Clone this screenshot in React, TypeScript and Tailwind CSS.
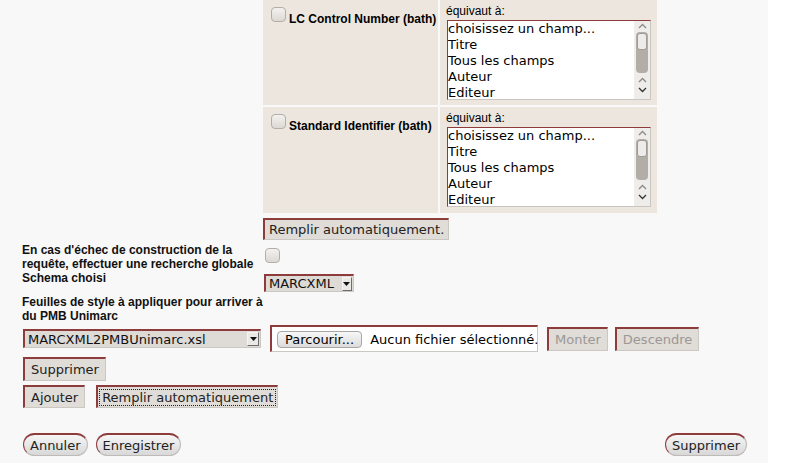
import type { ReactNode } from "react";

const fieldOptions = ["choisissez un champ...", "Titre", "Tous les champs", "Auteur", "Editeur"];

function Checkbox({ className = "" }: { className?: string }) {
  return (
    <span
      className={`block h-[15px] w-[15px] shrink-0 rounded-[4px] border border-[#b3aea8] bg-gradient-to-b from-[#f3f1ef] to-[#dcd8d4] ${className}`}
    />
  );
}

function Chevron({ down = false, color = "#777" }: { down?: boolean; color?: string }) {
  return (
    <svg width="9" height="6" viewBox="0 0 9 6" fill="none">
      <polyline
        points={down ? "1,1 4.5,4.5 8,1" : "1,5 4.5,1.5 8,5"}
        stroke={color}
        strokeWidth="1.3"
      />
    </svg>
  );
}

function FieldList() {
  return (
    <div className="ml-[1px] flex h-[80px] w-[204px] border border-[#c9c5c1] border-l-[#8e3b3b] border-t-[#8e3b3b] bg-white">
      <div className="flex-1 overflow-hidden font-['DejaVu_Sans',sans-serif] text-[13px] leading-[16px] text-black">
        {fieldOptions.map((option) => (
          <div key={option} className="whitespace-nowrap">
            {option}
          </div>
        ))}
      </div>
      <div className="flex w-[16px] flex-col items-center bg-[#efedea]">
        <div className="flex h-[9px] items-center">
          <Chevron color="#8a8a8a" />
        </div>
        <div className="mt-[2px] h-[41px] w-[12px] rounded-[4px] bg-[#b2ada7] p-[1px]">
          <div className="h-[17px] rounded-[3px] border border-[#9f9a95] bg-[#eeecea]" />
        </div>
        <div className="mt-[2px] flex h-[10px] items-center">
          <Chevron color="#8a8a8a" />
        </div>
        <div className="flex h-[10px] items-center">
          <Chevron down color="#333" />
        </div>
      </div>
    </div>
  );
}

function MappingRow({ label, height }: { label: string; height: string }) {
  return (
    <>
      <div className={`flex items-start bg-[#ece6df] pl-[8px] ${height}`}>
        <Checkbox className="mt-[7px]" />
        <span className="ml-[3px] mt-[12px] whitespace-nowrap text-[12px] font-bold leading-[14px] text-black">
          {label}
        </span>
      </div>
      <div className={`bg-[#ece6df] pl-[6px] pt-[4px] ${height}`}>
        <div className="text-[12px] leading-[14px] text-black">équivaut à:</div>
        <div className="mt-[2px]">
          <FieldList />
        </div>
      </div>
    </>
  );
}

function Btn({
  children,
  disabled = false,
  pad = "px-[6px]",
  className = ""
}: {
  children: ReactNode;
  disabled?: boolean;
  pad?: string;
  className?: string;
}) {
  return (
    <button
      type="button"
      disabled={disabled}
      className={`flex shrink-0 items-center whitespace-nowrap border-b border-l-2 border-r border-t-2 border-b-[#cbc7c3] border-l-[#8e3b3b] border-r-[#cbc7c3] border-t-[#8e3b3b] bg-[#e0dcd8] font-['DejaVu_Sans',sans-serif] text-[13px] leading-none ${
        disabled ? "text-[#9b9895]" : "text-[#222]"
      } ${pad} ${className}`}
    >
      {children}
    </button>
  );
}

function Pill({ children }: { children: ReactNode }) {
  return (
    <button
      type="button"
      className="flex h-[23px] items-center whitespace-nowrap rounded-full border border-[#bdbab7] border-l-[#8e3b3b] border-t-2 border-t-[#8e3b3b] bg-gradient-to-b from-[#f6f6f6] to-[#d8d8d8] px-[6px] font-['DejaVu_Sans',sans-serif] text-[13px] leading-none text-[#222]"
    >
      {children}
    </button>
  );
}

function Select({ value, size, className = "" }: { value: string; size: string; className?: string }) {
  return (
    <div
      className={`flex shrink-0 items-center justify-between border-b border-l-2 border-r border-t-2 border-b-[#cbc7c3] border-l-[#8e3b3b] border-r-[#cbc7c3] border-t-[#8e3b3b] bg-[#dedad6] pl-[3px] pr-[1px] font-['DejaVu_Sans',sans-serif] text-[13px] font-normal leading-none text-[#111] ${size} ${className}`}
    >
      <span className="whitespace-nowrap">{value}</span>
      <span className="ml-[8px] flex h-[14px] w-[12px] items-center justify-center border border-[#f5f5f5] border-b-[#6d6d6d] border-r-[#6d6d6d] bg-[#ebe9e6]">
        <svg width="7" height="4" viewBox="0 0 7 4">
          <polygon points="0,0 7,0 3.5,4" fill="#111" />
        </svg>
      </span>
    </div>
  );
}

export default function App() {
  return (
    <div className="h-[463px] w-[768px] overflow-hidden bg-[#f8f8f8] font-['Liberation_Sans',Arial,sans-serif]">
      <div className="ml-[263px] grid w-[394px] grid-cols-[175px_217px] gap-[2px]">
        <MappingRow label="LC Control Number (bath)" height="h-[105px]" />
        <MappingRow label="Standard Identifier (bath)" height="h-[106px]" />
      </div>

      <Btn pad="px-[4px]" className="ml-[263px] mt-[5px] h-[22px]">
        Remplir automatiquement.
      </Btn>

      <div className="pl-[22px]">
        <div className="mt-[3px] grid grid-cols-[241px_auto] text-[12px] font-bold leading-[14px] text-[#111]">
          <p>En cas d'échec de construction de la requête, effectuer une recherche globale</p>
          <div>
            <Checkbox className="ml-[2px] mt-[5px]" />
          </div>
          <p>Schema choisi</p>
          <div className="pt-[3px]">
            <Select value="MARCXML" size="h-[18px] w-[90px]" className="ml-[1px]" />
          </div>
          <p className="mt-[3px]">Feuilles de style à appliquer pour arriver à du PMB Unimarc</p>
          <div />
        </div>

        <div className="mt-[2px] flex items-start">
          <Select value="MARCXML2PMBUnimarc.xsl" size="h-[19px] w-[238px]" className="ml-[1px] mt-[4px]" />
          <div className="ml-[9px] flex h-[27px] w-[268px] items-center border-b border-l-2 border-r border-t-2 border-b-[#cbc7c3] border-l-[#8e3b3b] border-r-[#cbc7c3] border-t-[#8e3b3b] bg-white pl-[5px] font-['DejaVu_Sans',sans-serif] text-[13px] leading-none text-black">
            <span className="flex h-[17px] items-center rounded-[4px] border border-[#a9a6a3] bg-gradient-to-b from-[#f7f7f7] to-[#dcdcdc] px-[7px]">
              Parcourir...
            </span>
            <span className="ml-[8px] whitespace-nowrap">Aucun fichier sélectionné.</span>
          </div>
          <Btn disabled className="ml-[9px] mt-[2px] h-[24px]">
            Monter
          </Btn>
          <Btn disabled className="ml-[7px] mt-[2px] h-[24px]">
            Descendre
          </Btn>
        </div>

        <Btn className="ml-[1px] mt-[5px] h-[24px]">Supprimer</Btn>

        <div className="ml-[1px] mt-[4px] flex items-center gap-[11px]">
          <Btn className="h-[23px]">Ajouter</Btn>
          <Btn pad="px-[2px]" className="h-[23px]">
            <span className="px-[2px] py-[1px] outline-1 outline-dotted outline-[#222]">Remplir automatiquement</span>
          </Btn>
        </div>

        <div className="ml-[1px] mt-[25px] flex w-[724px] items-center justify-between">
          <div className="flex items-center gap-[8px]">
            <Pill>Annuler</Pill>
            <Pill>Enregistrer</Pill>
          </div>
          <Pill>Supprimer</Pill>
        </div>
      </div>
    </div>
  );
}
